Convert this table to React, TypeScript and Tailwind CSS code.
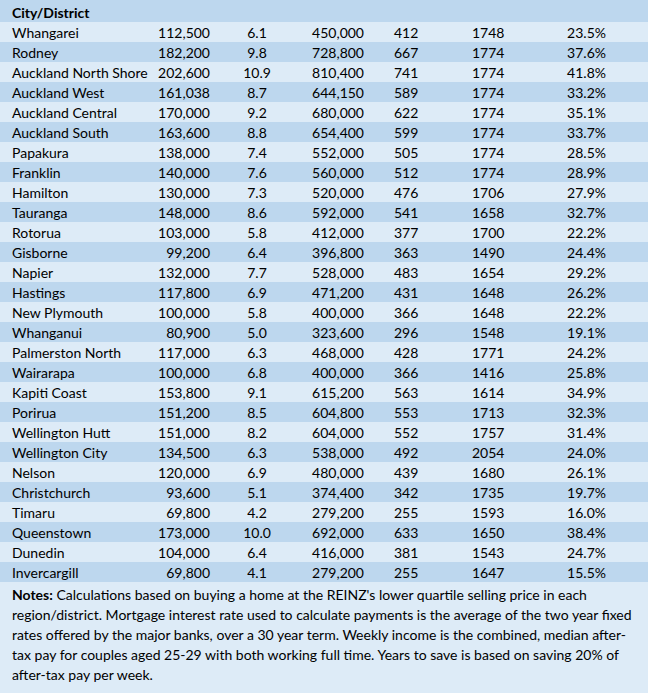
const rows: [string, string, string, string, string, string, string][] = [
  ["Whangarei", "112,500", "6.1", "450,000", "412", "1748", "23.5%"],
  ["Rodney", "182,200", "9.8", "728,800", "667", "1774", "37.6%"],
  ["Auckland North Shore", "202,600", "10.9", "810,400", "741", "1774", "41.8%"],
  ["Auckland West", "161,038", "8.7", "644,150", "589", "1774", "33.2%"],
  ["Auckland Central", "170,000", "9.2", "680,000", "622", "1774", "35.1%"],
  ["Auckland South", "163,600", "8.8", "654,400", "599", "1774", "33.7%"],
  ["Papakura", "138,000", "7.4", "552,000", "505", "1774", "28.5%"],
  ["Franklin", "140,000", "7.6", "560,000", "512", "1774", "28.9%"],
  ["Hamilton", "130,000", "7.3", "520,000", "476", "1706", "27.9%"],
  ["Tauranga", "148,000", "8.6", "592,000", "541", "1658", "32.7%"],
  ["Rotorua", "103,000", "5.8", "412,000", "377", "1700", "22.2%"],
  ["Gisborne", "99,200", "6.4", "396,800", "363", "1490", "24.4%"],
  ["Napier", "132,000", "7.7", "528,000", "483", "1654", "29.2%"],
  ["Hastings", "117,800", "6.9", "471,200", "431", "1648", "26.2%"],
  ["New Plymouth", "100,000", "5.8", "400,000", "366", "1648", "22.2%"],
  ["Whanganui", "80,900", "5.0", "323,600", "296", "1548", "19.1%"],
  ["Palmerston North", "117,000", "6.3", "468,000", "428", "1771", "24.2%"],
  ["Wairarapa", "100,000", "6.8", "400,000", "366", "1416", "25.8%"],
  ["Kapiti Coast", "153,800", "9.1", "615,200", "563", "1614", "34.9%"],
  ["Porirua", "151,200", "8.5", "604,800", "553", "1713", "32.3%"],
  ["Wellington Hutt", "151,000", "8.2", "604,000", "552", "1757", "31.4%"],
  ["Wellington City", "134,500", "6.3", "538,000", "492", "2054", "24.0%"],
  ["Nelson", "120,000", "6.9", "480,000", "439", "1680", "26.1%"],
  ["Christchurch", "93,600", "5.1", "374,400", "342", "1735", "19.7%"],
  ["Timaru", "69,800", "4.2", "279,200", "255", "1593", "16.0%"],
  ["Queenstown", "173,000", "10.0", "692,000", "633", "1650", "38.4%"],
  ["Dunedin", "104,000", "6.4", "416,000", "381", "1543", "24.7%"],
  ["Invercargill", "69,800", "4.1", "279,200", "255", "1647", "15.5%"],
];

export default function App() {
  return (
    <div
      className="w-[648px] h-[693px] bg-[#ddebf7] text-[14px] text-black overflow-hidden"
      style={{ fontFamily: "Lato, 'Liberation Sans', sans-serif" }}
    >
      <div className="h-[22px] bg-[#bdd7ee] pl-[12px] pt-[2px] flex items-center font-bold">
        City/District
      </div>

      {rows.map((r, i) => (
        <div
          key={r[0]}
          className={`h-[20px] pt-[1px] flex items-center whitespace-nowrap ${
            i % 2 === 0 ? "bg-[#ddebf7]" : "bg-[#bdd7ee]"
          }`}
        >
          <div className="w-[150px] pl-[12px]">{r[0]}</div>
          <div className="w-[60px] text-right">{r[1]}</div>
          <div className="w-[22px]" />
          <div className="w-[50px] text-center">{r[2]}</div>
          <div className="w-[82px] text-right">{r[3]}</div>
          <div className="w-[78px] pl-[30px]">{r[4]}</div>
          <div className="w-[100px] pl-[30px]">{r[5]}</div>
          <div className="w-[64px] text-right">{r[6]}</div>
        </div>
      ))}

      {/* notes block, lines broken as in the source sheet */}
      <div className="pl-[12px] pt-[3px] leading-[20px] whitespace-nowrap">
        <div>
          <span className="font-bold">Notes:</span> Calculations based on buying a home at the
          REINZ's lower quartile selling price in each
        </div>
        <div>
          region/district. Mortgage interest rate used to calculate payments is the average of the
          two year fixed
        </div>
        <div>
          rates offered by the major banks, over a 30 year term. Weekly income is the combined,
          median after-
        </div>
        <div>
          tax pay for couples aged 25-29 with both working full time. Years to save is based on
          saving 20% of
        </div>
        <div>after-tax pay per week.</div>
      </div>
    </div>
  );
}
